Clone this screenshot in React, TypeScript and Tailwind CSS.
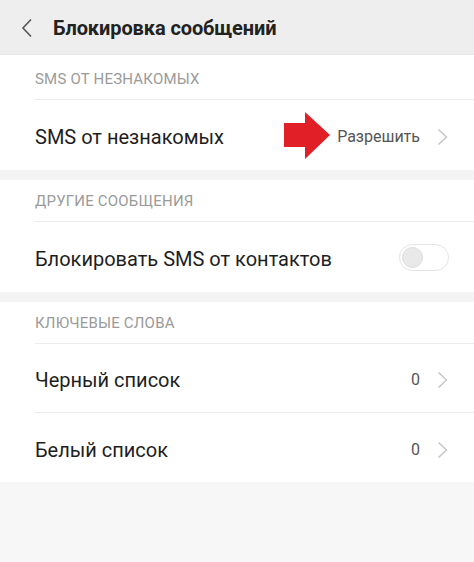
import React from "react";

const Chevron = () => (
  <svg width="11" height="18" viewBox="0 0 11 18" className="ml-[17px]">
    <path d="M1.5 1.5 L9.5 9 L1.5 16.5" fill="none" stroke="#c4c4c4" strokeWidth="1.4" />
  </svg>
);

const SectionHeader = ({ title, first }: { title: string; first?: boolean }) => (
  <div className="pl-[35px] bg-white">
    <div
      className={`${first ? "h-[45px] pt-[4px]" : "h-[42px] pt-[2px]"} flex items-center border-b border-[#ececec] text-[15px] text-[#9a9a9a] tracking-[0.2px]`}
    >
      {title}
    </div>
  </div>
);

const Row = ({ label, right, divider, h70 }: { label: string; right?: React.ReactNode; divider?: boolean; h70?: boolean }) => (
  <div className="pl-[35px] bg-white">
    <div
      className={`${h70 ? "h-[70px]" : "h-[69px]"} pt-[4px] flex items-center pr-[26px] ${divider ? "border-b border-[#ececec]" : ""}`}
    >
      <span className="flex-1 text-[20px] text-[#1e1e1e]">{label}</span>
      {right}
    </div>
  </div>
);

export default function App() {
  return (
    <div className="w-[474px] h-[562px] bg-[#f7f7f7] flex flex-col" style={{ fontFamily: "Roboto, 'Noto Sans', sans-serif" }}>
      <div className="h-[55px] bg-[#eeeeee] flex items-center shrink-0 border-b border-[#e6e6e6] pt-[2px]">
        <svg width="12" height="20" viewBox="0 0 12 20" className="ml-[21px]">
          <path d="M10 1.5 L2 10 L10 18.5" fill="none" stroke="#555" strokeWidth="1.6" />
        </svg>
        <span className="ml-[20px] text-[20px] font-bold text-[#222] tracking-[-0.1px]">Блокировка сообщений</span>
      </div>
      <div className="flex flex-col">
        <SectionHeader title="SMS ОТ НЕЗНАКОМЫХ" first />
        <Row
          h70
          label="SMS от незнакомых"
          right={
            <div className="flex items-center">
              <svg width="47" height="48" viewBox="0 0 47 48" className="mr-[6px] mt-[-2px]">
                <path d="M0 11 H21 V0 L46 23 L21 47 V35 H0 Z" fill="#e01f26" />
              </svg>
              <span className="text-[16px] text-[#555]">Разрешить</span>
              <Chevron />
            </div>
          }
        />
        <div className="h-[10px] bg-[#f4f4f4]" />
        <SectionHeader title="ДРУГИЕ СООБЩЕНИЯ" />
        <Row
          h70
          label="Блокировать SMS от контактов"
          right={
            <div className="w-[50px] h-[27px] rounded-full border border-[#e3e3e3] bg-white flex items-center pl-[2px] mr-[-1px] mt-[-4px]">
              <div className="w-[21px] h-[21px] rounded-full bg-[#e9e9e9] border border-[#dcdcdc]" />
            </div>
          }
        />
        <div className="h-[10px] bg-[#f4f4f4]" />
        <SectionHeader title="КЛЮЧЕВЫЕ СЛОВА" />
        <Row
          label="Черный список"
          divider
          right={
            <div className="flex items-center">
              <span className="text-[16px] text-[#555]">0</span>
              <Chevron />
            </div>
          }
        />
        <Row
          label="Белый список"
          right={
            <div className="flex items-center">
              <span className="text-[16px] text-[#555]">0</span>
              <Chevron />
            </div>
          }
        />
      </div>
    </div>
  );
}
